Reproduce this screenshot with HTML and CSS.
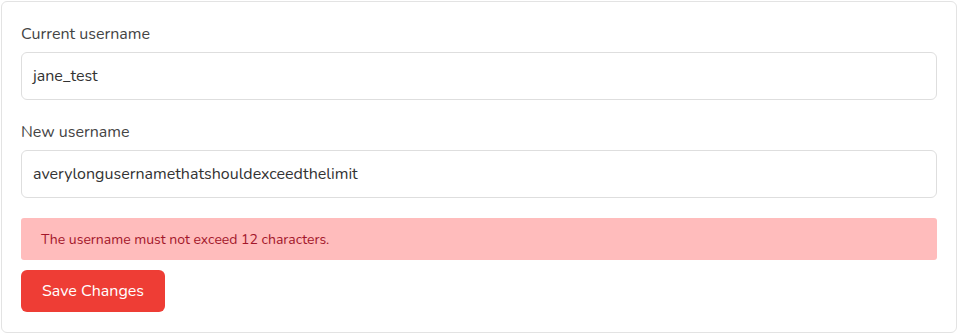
FILE: index.html
```html
<!DOCTYPE html>
<html>
<head>
<meta charset="utf-8">
<link rel="stylesheet" href="styles.css">
</head>
<body>
<div class="card">
  <div class="group">
    <label class="label">Current username</label>
    <div class="input">jane_test</div>
  </div>
  <div class="group">
    <label class="label">New username</label>
    <div class="input">averylongusernamethatshouldexceedthelimit</div>
  </div>
  <div class="alert">The username must not exceed 12 characters.</div>
  <button class="btn">Save Changes</button>
</div>
</body>
</html>
```
FILE: styles.css
```css
html, body {
  margin: 0;
  padding: 0;
  background: #ffffff;
}
body {
  font-family: "Nunito", "Lato", "Open Sans", sans-serif;
  padding: 1px 1px 2px 1px;
}
.card {
  border: 1px solid #e3e3e3;
  border-radius: 6px;
  padding: 20px 19px 20px 19px;
  background: #fff;
}
.group {
  display: flex;
  flex-direction: column;
  margin-bottom: 20px;
}
.label {
  font-size: 16px;
  line-height: 24px;
  color: #444;
  margin-bottom: 6px;
}
.input {
  box-sizing: border-box;
  height: 48px;
  border: 1px solid #dedede;
  border-radius: 6px;
  padding: 0 11px;
  display: flex;
  align-items: center;
  font-size: 16px;
  color: #333;
}
.alert {
  box-sizing: border-box;
  height: 42px;
  background: #ffbcbc;
  border-radius: 3px;
  color: #a3162a;
  font-size: 14px;
  display: flex;
  align-items: center;
  padding: 0 20px;
  margin-bottom: 10px;
}
.btn {
  box-sizing: border-box;
  height: 42px;
  width: 144px;
  border: none;
  border-radius: 6px;
  background: #ee3d35;
  color: #fff;
  font-family: inherit;
  font-size: 16px;
  display: block;
}
```
